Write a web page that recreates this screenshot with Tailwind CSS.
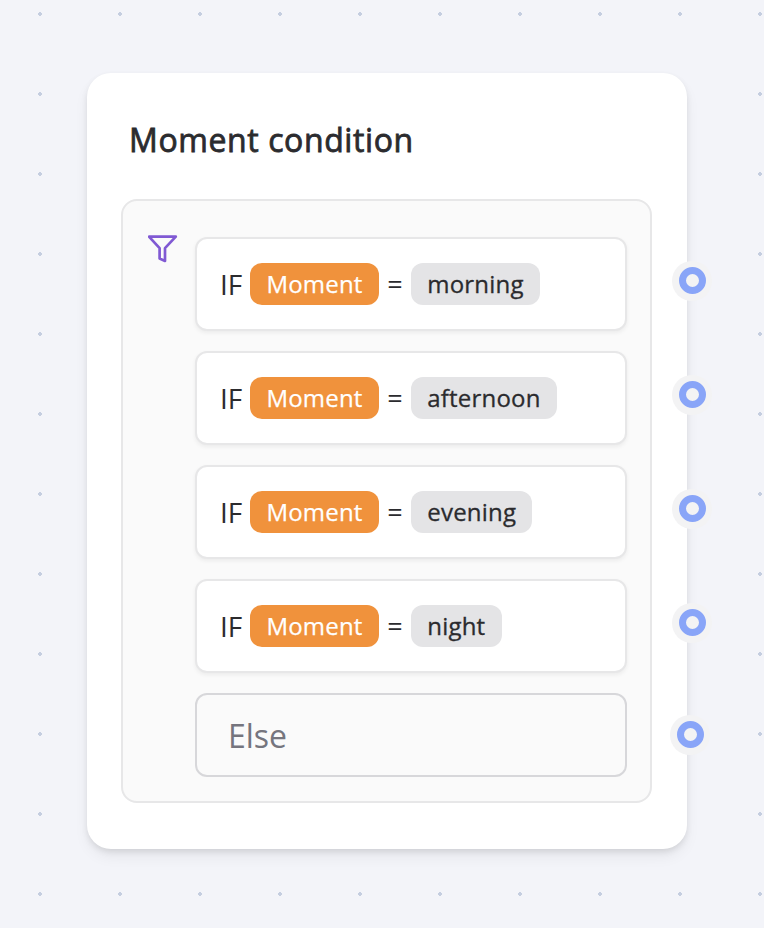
<!DOCTYPE html>
<html lang="en">
<head>
<meta charset="utf-8">
<title>Moment condition</title>
<script src="https://cdn.jsdelivr.net/npm/@tailwindcss/browser@4"></script>
</head>
<body class="relative h-[928px] w-[764px] overflow-hidden bg-[#f3f4f9] font-['Open_Sans','Noto_Sans',sans-serif] text-[#2b2b2e]">
<svg class="absolute inset-0" width="764" height="928" aria-hidden="true">
  <defs><pattern id="dots" width="80" height="80" patternUnits="userSpaceOnUse"><path d="M39 12h2v4h-2zM38 13h4v2h-4z" fill="#c5cee0"/></pattern></defs>
  <rect width="764" height="928" fill="url(#dots)"/>
</svg>
<main class="relative pl-[86.5px] pt-[73px]">
  <section class="h-[776px] w-[600px] rounded-[24px] bg-white px-[34px] pt-[42px] shadow-[0_8px_16px_-2px_rgba(0,0,0,0.07),0_3px_7px_-1px_rgba(0,0,0,0.11)]">
    <h1 class="h-[84px] pl-[8.5px] text-[32px] leading-[50px] font-medium tracking-[0.6px] whitespace-nowrap [-webkit-text-stroke:0.8px_#2b2b2e]">Moment condition</h1>
    <div class="flex h-[604px] w-[531.5px] rounded-[16px] border-2 border-[#e7e7e8] bg-[#fafafa] pt-[36px] pl-[25px]">
      <svg class="-mt-[4px] mr-[17px] h-[32px] w-[30px] shrink-0" viewBox="0 0 30 32" fill="none" stroke="#8059d3" stroke-width="2.7" stroke-linejoin="round"><path d="M1 3.7H27.8L17 15.2V28L11.6 25.6V15.2Z"/></svg>
      <div class="flex w-[432px] shrink-0 flex-col gap-[20px]">
        <div class="relative flex h-[94px] items-center rounded-[12px] border-2 border-[#e7e7e8] bg-white pl-[23.5px] text-[28px] shadow-[0_2px_4px_rgba(0,0,0,0.06)]">
          <span class="w-[30px]">IF</span><span class="flex h-[42px] w-[129px] items-center justify-center rounded-[12px] bg-[#f0923c] text-[24px] tracking-[0.2px] text-white [-webkit-text-stroke:0.25px_#ffffff]">Moment</span><span class="w-[32px] text-center text-[27px]">=</span><span class="flex h-[42px] items-center rounded-[12px] bg-[#e4e4e6] px-[16.3px] text-[24px] tracking-[0.2px] [-webkit-text-stroke:0.3px_#2b2b2e]">morning</span>
          <i class="absolute top-[21.5px] left-[475.5px] flex size-[40px] items-center justify-center rounded-full bg-[#f3f3f4]"><b class="size-[27px] rounded-full border-[7px] border-[#89a5f8]"></b></i>
        </div>
        <div class="relative flex h-[94px] items-center rounded-[12px] border-2 border-[#e7e7e8] bg-white pl-[23.5px] text-[28px] shadow-[0_2px_4px_rgba(0,0,0,0.06)]">
          <span class="w-[30px]">IF</span><span class="flex h-[42px] w-[129px] items-center justify-center rounded-[12px] bg-[#f0923c] text-[24px] tracking-[0.2px] text-white [-webkit-text-stroke:0.25px_#ffffff]">Moment</span><span class="w-[32px] text-center text-[27px]">=</span><span class="flex h-[42px] items-center rounded-[12px] bg-[#e4e4e6] px-[16.3px] text-[24px] tracking-[0.2px] [-webkit-text-stroke:0.3px_#2b2b2e]">afternoon</span>
          <i class="absolute top-[21.5px] left-[475.5px] flex size-[40px] items-center justify-center rounded-full bg-[#f3f3f4]"><b class="size-[27px] rounded-full border-[7px] border-[#89a5f8]"></b></i>
        </div>
        <div class="relative flex h-[94px] items-center rounded-[12px] border-2 border-[#e7e7e8] bg-white pl-[23.5px] text-[28px] shadow-[0_2px_4px_rgba(0,0,0,0.06)]">
          <span class="w-[30px]">IF</span><span class="flex h-[42px] w-[129px] items-center justify-center rounded-[12px] bg-[#f0923c] text-[24px] tracking-[0.2px] text-white [-webkit-text-stroke:0.25px_#ffffff]">Moment</span><span class="w-[32px] text-center text-[27px]">=</span><span class="flex h-[42px] items-center rounded-[12px] bg-[#e4e4e6] px-[16.3px] text-[24px] tracking-[0.2px] [-webkit-text-stroke:0.3px_#2b2b2e]">evening</span>
          <i class="absolute top-[21.5px] left-[475.5px] flex size-[40px] items-center justify-center rounded-full bg-[#f3f3f4]"><b class="size-[27px] rounded-full border-[7px] border-[#89a5f8]"></b></i>
        </div>
        <div class="relative flex h-[94px] items-center rounded-[12px] border-2 border-[#e7e7e8] bg-white pl-[23.5px] text-[28px] shadow-[0_2px_4px_rgba(0,0,0,0.06)]">
          <span class="w-[30px]">IF</span><span class="flex h-[42px] w-[129px] items-center justify-center rounded-[12px] bg-[#f0923c] text-[24px] tracking-[0.2px] text-white [-webkit-text-stroke:0.25px_#ffffff]">Moment</span><span class="w-[32px] text-center text-[27px]">=</span><span class="flex h-[42px] items-center rounded-[12px] bg-[#e4e4e6] px-[16.3px] text-[24px] tracking-[0.2px] [-webkit-text-stroke:0.3px_#2b2b2e]">night</span>
          <i class="absolute top-[21.5px] left-[475.5px] flex size-[40px] items-center justify-center rounded-full bg-[#f3f3f4]"><b class="size-[27px] rounded-full border-[7px] border-[#89a5f8]"></b></i>
        </div>
        <div class="relative flex h-[84px] items-center rounded-[12px] border-2 border-[#d7d7da] pl-[31.5px] text-[32px] text-[#75757e]">
          <span class="pt-[2px]">Else</span>
          <i class="absolute top-[19.5px] left-[473.5px] flex size-[40px] items-center justify-center rounded-full bg-[#f3f3f4]"><b class="size-[27px] rounded-full border-[7px] border-[#89a5f8]"></b></i>
        </div>
      </div>
    </div>
  </section>
</main>
</body>
</html>
